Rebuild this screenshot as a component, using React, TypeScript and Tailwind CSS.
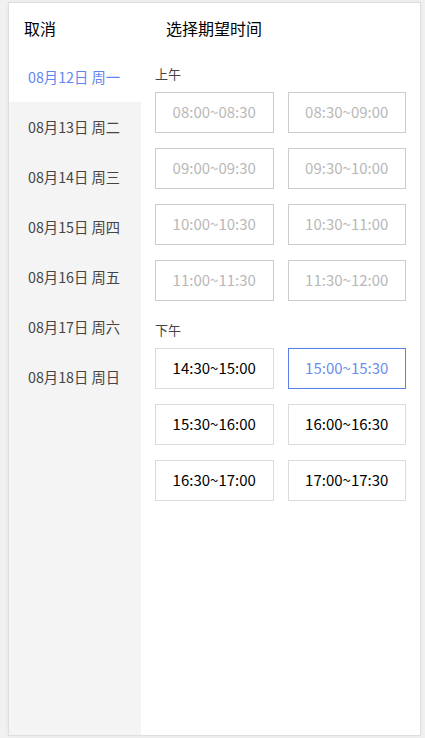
import React, { useState } from 'react';

const days = [
  '08月12日 周一',
  '08月13日 周二',
  '08月14日 周三',
  '08月15日 周四',
  '08月16日 周五',
  '08月17日 周六',
  '08月18日 周日',
];

const morning = [
  '08:00~08:30',
  '08:30~09:00',
  '09:00~09:30',
  '09:30~10:00',
  '10:00~10:30',
  '10:30~11:00',
  '11:00~11:30',
  '11:30~12:00',
];

const afternoon = [
  '14:30~15:00',
  '15:00~15:30',
  '15:30~16:00',
  '16:00~16:30',
  '16:30~17:00',
  '17:00~17:30',
];

export default function App() {
  const [day, setDay] = useState(0);
  const [slot, setSlot] = useState('15:00~15:30');

  return (
    <div
      className="w-[425px] h-[738px] bg-[#f1f1f1] pt-[2px] pl-[8px] pr-[4px] pb-[2px]"
      style={{ fontFamily: '"Noto Sans CJK SC", sans-serif' }}
    >
      <div className="h-[734px] w-[413px] border border-[#dedede] bg-white flex flex-col shadow-[0_0_4px_rgba(0,0,0,0.06)]">
        {/* header */}
        <div className="h-[49px] flex items-center shrink-0">
          <div className="w-[132px] pl-[15px] text-[16px] text-black">取消</div>
          <div className="pl-[25px] text-[16px] text-black">选择期望时间</div>
        </div>

        <div className="flex flex-1">
          {/* day list */}
          <div className="w-[132px] bg-[#f4f4f4] flex flex-col">
            {days.map((d, i) => (
              <div
                key={d}
                onClick={() => setDay(i)}
                className={`h-[50px] flex items-center pl-[19px] text-[14.3px] cursor-pointer ${
                  i === day ? 'bg-white text-[#5f86f0]' : 'text-[#444]'
                }`}
              >
                {d}
              </div>
            ))}
          </div>

          {/* slots */}
          <div className="flex-1 pl-[14px] pr-[14px] pt-[13px]">
            <div className="text-[13px] text-[#444] leading-[18px] mb-[9px]">上午</div>
            <div className="grid grid-cols-2 gap-x-[14px] gap-y-[15px]">
              {morning.map((t) => (
                <div
                  key={t}
                  className="h-[41px] border border-[#cccccc] flex items-center justify-center text-[15px] text-[#b8b8b8]"
                >
                  {t}
                </div>
              ))}
            </div>

            <div className="text-[13px] text-[#444] leading-[18px] mt-[20px] mb-[9px]">下午</div>
            <div className="grid grid-cols-2 gap-x-[14px] gap-y-[15px]">
              {afternoon.map((t) => (
                <div
                  key={t}
                  onClick={() => setSlot(t)}
                  className={`h-[41px] border flex items-center justify-center text-[15px] cursor-pointer ${
                    t === slot ? 'border-[#5b7fe8] text-[#6a8ef0]' : 'border-[#dcdcdc] text-black'
                  }`}
                >
                  {t}
                </div>
              ))}
            </div>
          </div>
        </div>
      </div>
    </div>
  );
}
